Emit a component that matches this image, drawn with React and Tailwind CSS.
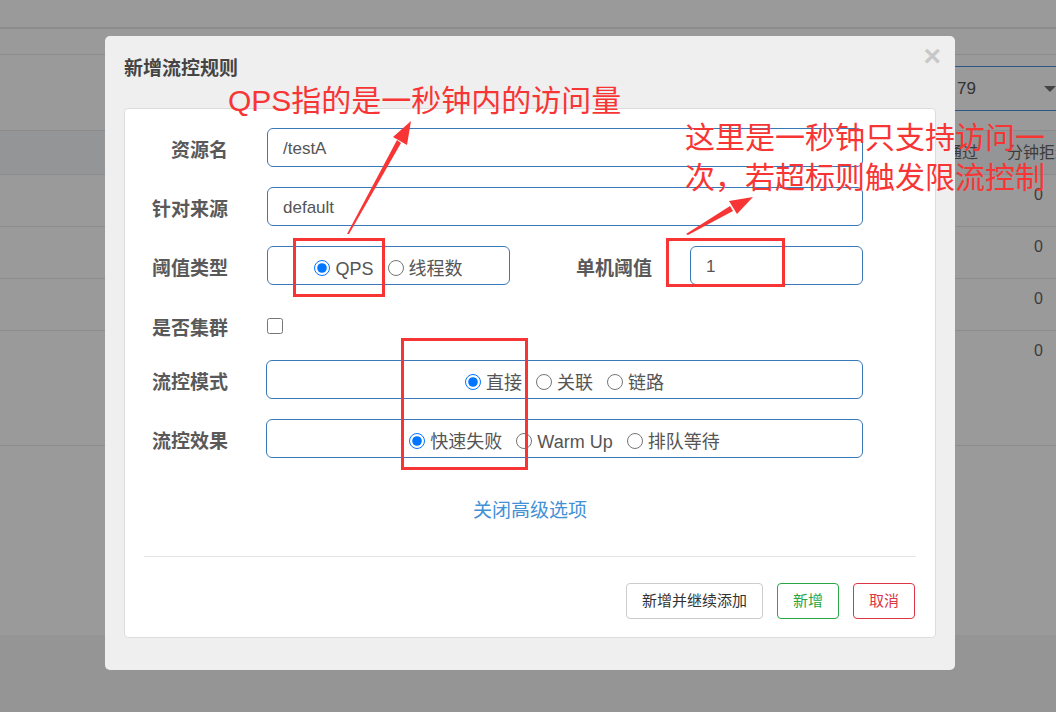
import { useState } from 'react'

const LABEL = 'pt-[6px] text-right text-[19px] font-bold leading-[26px] text-[#595959]'
const BOX = 'h-[39px] rounded-[6px] border border-[#3a79b8] bg-white'

function Radio({ name, label, checked }) {
  return (
    <label className="flex items-center gap-[5px] text-[18px] leading-[24px] text-[#555]">
      <input type="radio" name={name} defaultChecked={checked} className="m-0 h-4 w-4 accent-[#0075ff]" />
      <span className="pt-[2px]">{label}</span>
    </label>
  )
}

function TextRow({ label, value }) {
  return (
    <div className="flex items-center">
      <div className={`w-[103px] ${LABEL}`}>{label}</div>
      <div className={`ml-[39px] flex w-[596px] items-center pl-[15px] pt-[2px] text-[17px] text-[#555] ${BOX}`}>{value}</div>
    </div>
  )
}

function RadioRow({ label, name, options, className = '' }) {
  return (
    <div className={`flex items-center ${className}`}>
      <div className={`w-[103px] ${LABEL}`}>{label}</div>
      <div className={`ml-[38px] flex w-[597px] items-center justify-center gap-[14px] pt-[5px] ${BOX}`}>
        {options.map((o, i) => (
          <Radio key={o} name={name} label={o} checked={i === 0} />
        ))}
      </div>
    </div>
  )
}

// greyed-out page behind the modal
function BackPage() {
  return (
    <div>
      <div className="h-[29px] border-b-2 border-[#8c8c8c]" />
      <div className="h-[26px] border-b border-[#8c8c8c]" />
      <div className="flex h-[76px] justify-end border-b border-[#8c8c8c] pt-[11px]">
        <div className="flex h-[45px] w-[140px] items-center border border-r-0 border-[#2c5684] pl-[40px] text-[17px] text-[#333]">
          79
          <span className="ml-auto h-0 w-0 border-x-[6px] border-t-[6px] border-x-transparent border-t-[#444]" />
        </div>
      </div>
      <div className="flex h-[44px] items-center gap-[29px] whitespace-nowrap border-b border-[#8c8c8c] bg-[#939597] pl-[946px] text-[16px] text-[#3c3c3c]">
        <span>通过</span>
        <span>分钟拒绝</span>
      </div>
      {[52, 52, 52, 115].map((h, i) => (
        <div
          key={i}
          className={`flex justify-end border-b border-[#8c8c8c] pr-[13px] pt-[8px] text-[16px] leading-[24px] text-[#3c3c3c] ${h === 52 ? 'h-[52px]' : 'h-[115px]'}`}
        >
          0
        </div>
      ))}
      <div className="h-[189px]" />
      <div className="h-[77px] bg-[#959595]" />
    </div>
  )
}

export default function App() {
  const [open] = useState(true)
  return (
    <div className="relative h-[712px] w-[1056px] overflow-hidden bg-[#9a9a9a] font-['Liberation_Sans','Noto_Sans_CJK_SC',sans-serif]">
      <BackPage />

      {open && (
        <div className="absolute left-[105px] top-[36px] h-[634px] w-[850px] rounded-[5px] bg-[#efefef]">
          <div className="flex h-[72px] items-start justify-between pl-[19px] pr-[14px]">
            <h4 className="pt-[20px] text-[19px] font-bold leading-[26px] text-[#444]">新增流控规则</h4>
            <span className="mt-[6px] text-[30px] font-bold leading-[28px] text-[#c8c8c8]">×</span>
          </div>

          <div className="mx-[19px] h-[530px] rounded-[4px] border border-[#dcdcdc] bg-white pt-[19px]">
            <TextRow label="资源名" value="/testA" />
            <div className="mt-[20px]">
              <TextRow label="针对来源" value="default" />
            </div>

            <div className="mt-[20px] flex items-center">
              <div className={`w-[103px] ${LABEL}`}>阈值类型</div>
              <div className={`ml-[39px] flex w-[243px] items-center justify-center gap-[14px] pt-[5px] ${BOX}`}>
                <Radio name="grade" label="QPS" checked />
                <Radio name="grade" label="线程数" />
              </div>
              <div className={`w-[142px] ${LABEL}`}>单机阈值</div>
              <div className={`ml-[38px] flex w-[173px] items-center pl-[15px] pt-[2px] text-[17px] text-[#555] ${BOX}`}>1</div>
            </div>

            <div className="mt-[20px] flex h-[41px] items-center">
              <div className={`w-[103px] ${LABEL}`}>是否集群</div>
              <input type="checkbox" className="m-0 ml-[39px] h-4 w-4" />
            </div>

            <RadioRow className="mt-[14px]" label="流控模式" name="strategy" options={['直接', '关联', '链路']} />
            <RadioRow className="mt-[20px]" label="流控效果" name="behavior" options={['快速失败', 'Warm Up', '排队等待']} />

            <div className="mt-[40px] text-center text-[19px] leading-[26px] text-[#4290d6]">关闭高级选项</div>

            <div className="mx-[19px] mt-[32px] border-t border-[#e5e5e5]" />

            <div className="mt-[26px] flex justify-end gap-[14px] pr-[20px] text-[15px]">
              <button className="h-[36px] w-[137px] rounded-[4px] border border-[#cccccc] bg-white text-[#333]">新增并继续添加</button>
              <button className="h-[36px] w-[62px] rounded-[4px] border border-[#28a745] bg-white text-[#28a745]">新增</button>
              <button className="h-[36px] w-[62px] rounded-[4px] border border-[#dc3545] bg-white text-[#dc3545]">取消</button>
            </div>
          </div>
        </div>
      )}

      {/* red screenshot annotations */}
      <svg className="pointer-events-none absolute inset-0" width="1056" height="712" viewBox="0 0 1056 712">
        <g fill="none" stroke="#f83535" strokeWidth="3">
          <rect x="294.5" y="239.5" width="89" height="56" />
          <rect x="667.5" y="239.5" width="116" height="46" />
          <rect x="402.5" y="339.5" width="124" height="129" />
        </g>
        <g fill="#f83535">
          <polygon points="347,234 349,234 401,143 397,140" />
          <polygon points="411,121 393,137 407,145" />
          <polygon points="686,234 688,235 733,211 730,206" />
          <polygon points="753,197 729,201 737,214" />
        </g>
      </svg>
      <div className="pointer-events-none absolute left-[228px] top-[86px] whitespace-nowrap text-[30px] leading-[30px] text-[#f83535]">
        QPS指的是一秒钟内的访问量
      </div>
      <div className="pointer-events-none absolute left-[685px] top-[118px] whitespace-nowrap text-[30px] leading-[40px] text-[#f83535]">
        <div>这里是一秒钟只支持访问一</div>
        <div>次，若超标则触发限流控制</div>
      </div>
    </div>
  )
}
